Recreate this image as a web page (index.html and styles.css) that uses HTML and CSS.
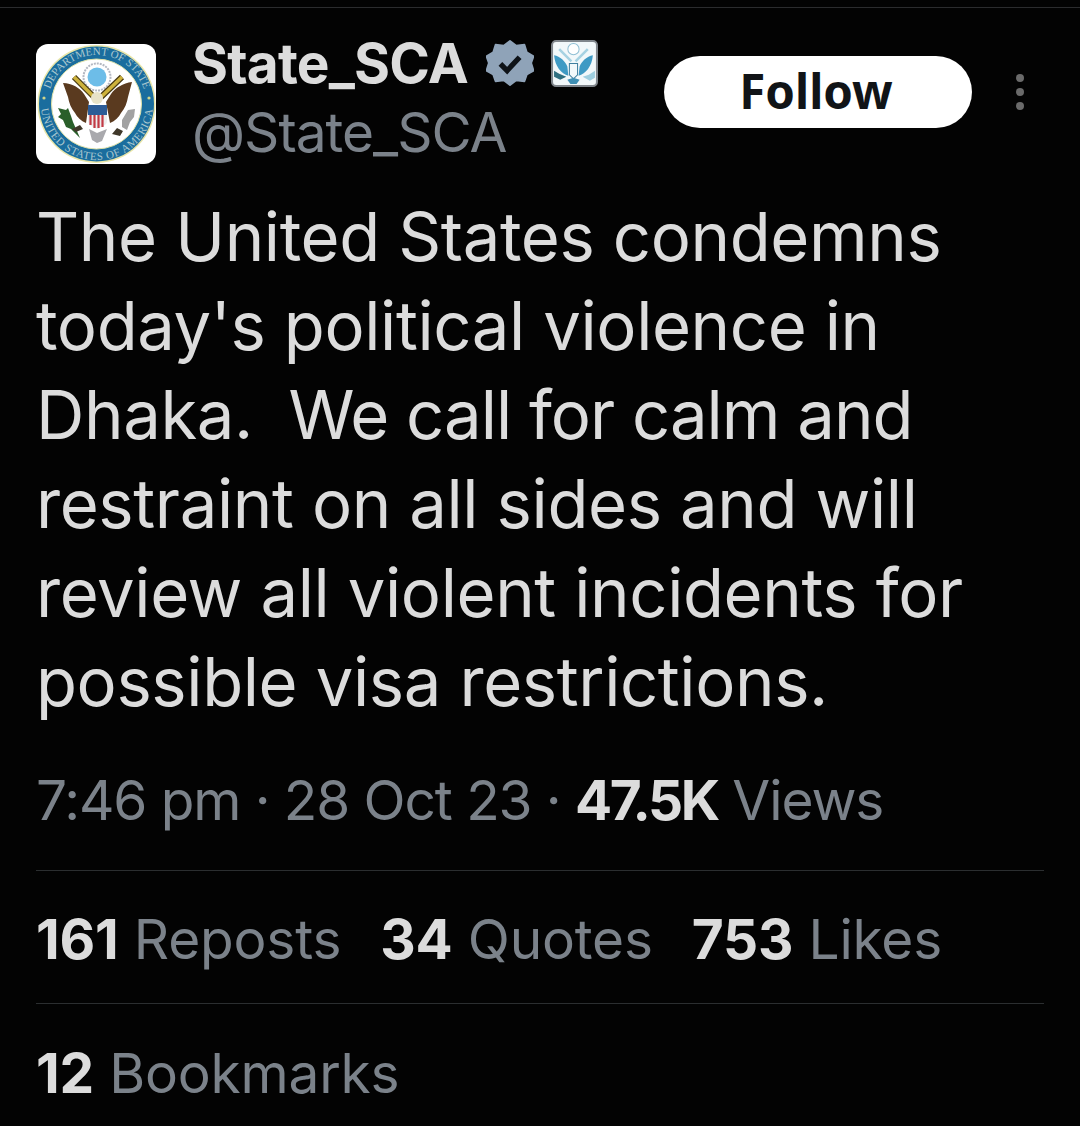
FILE: index.html
```html
<!DOCTYPE html>
<html lang="en">
<head>
    <meta charset="UTF-8">
    <meta name="viewport" content="width=device-width, initial-scale=1.0">
    <title>State_SCA</title>
    <link rel="stylesheet" href="styles.css">
</head>
<body>
    <div class="topline"></div>
    <div class="tweet">
        <div class="head">
            <div class="avatar">
                <svg viewBox="0 0 120 120" width="120" height="120">
                    <defs>
                        <path id="arcTop" d="M12 60a49 49 0 0 1 98 0"/>
                        <path id="arcBottom" d="M5 60a56 56 0 0 0 112 0"/>
                    </defs>
                    <circle cx="60.500" cy="60" r="59" fill="#e9e6a8"/>
                    <circle cx="60.500" cy="60" r="57.500" fill="#1a6d9e"/>
                    <circle cx="60.500" cy="60" r="45" fill="#fff" stroke="#dfe2a8"/>
                    <circle cx="8" cy="54" r="1.600" fill="#cfd48a"/>
                    <circle cx="113" cy="54" r="1.600" fill="#cfd48a"/>
                    <text class="seal-text"><textPath href="#arcTop" startOffset="50%" text-anchor="middle">DEPARTMENT OF STATE</textPath></text>
                    <text class="seal-text wide"><textPath href="#arcBottom" startOffset="50%" text-anchor="middle">UNITED STATES OF AMERICA</textPath></text>
                    <circle cx="61" cy="33" r="13.500" fill="#fff" stroke="#b4b8c2" stroke-width="2" stroke-dasharray="2 1"/>
                    <circle cx="61" cy="33" r="9.500" fill="#6dbde8"/>
                    <path d="M27 39c9 0 17 5 21 11l5 8-3 21c-5-2-9-6-11-10-4-5-6-10-7-16z" fill="#5a3a1f"/>
                    <path d="M96 38c-9 1-17 6-21 12l-5 8 4 21c5-2 9-6 11-10 4-5 6-10 7-16z" fill="#5a3a1f"/>
                    <path d="M38 33l20 20M86 33 65 53" stroke="#4a3b14" stroke-width="6" fill="none"/>
                    <path d="M38 33l20 20M86 33 65 53" stroke="#cdb23c" stroke-width="3.500" fill="none"/>
                    <circle cx="61" cy="54" r="6" fill="#e8e2c8"/>
                    <path d="M52 61h19v16c0 4-5 6-9.500 8-4.500-2-9.500-4-9.500-8z" fill="#eee"/>
                    <path d="M54.500 71v10M58.500 71v13M62.500 71v13M66.500 71v12" stroke="#c23a45" stroke-width="2.200"/>
                    <rect x="52" y="61" width="19" height="10" fill="#2c5c97"/>
                    <path d="M22 64l8 2 2-2 3 8 2 6 7 16-9-9-5-2-3-7-5-3 3-3z" fill="#2a5f2a"/>
                    <path d="M86 76l6-10 7-1-1 8-4 5-3 8-5-3z" fill="#a2a2a2"/>
                    <path d="M53 85l3 11 5 3 5-2 5-12-10 4z" fill="#a9a9ad"/>
                    <path d="M36 85l8-4 3 4-7 3zM76 90l5-6 6 3-3 5z" fill="#40382a"/>
                </svg>
            </div>
            <div class="names">
                <div class="name-row">
                    <span class="name">State_SCA</span>
                    <svg class="badge" viewBox="0 0 50 50" width="48" height="48">
                        <path d="M25 2l6.500 5 8.500-1 2.500 8 7 4-2.500 7 2.500 8-7 4-2.500 7-8.500-1-6.500 5-6.500-5-8.500 1-2.500-7-7-4 2.500-8-2.500-7 7-4 2.500-8 8.500 1z" fill="#8fa3b8" stroke="#8fa3b8" stroke-width="2" stroke-linejoin="round"/>
                        <path d="M15 26l7 7 13-14" fill="none" stroke="#0e1318" stroke-width="5.500"/>
                    </svg>
                    <span class="gov-mark">
                        <svg viewBox="0 0 46 46" width="47" height="47">
                            <rect x="1" y="1" width="44" height="44" rx="4" fill="#f2f8fa" stroke="#80868c" stroke-width="2"/>
                            <circle cx="22" cy="9" r="5.500" fill="#fff" stroke="#8fbfd4"/>
                            <path d="M8 9l12 12M36 9 24 21" stroke="#a6d2e2" stroke-width="2.500"/>
                            <path d="M3 15c6 1 11 6 13 11l1 9c-7-2-13-9-14-20zM41 15c-6 1-11 6-13 11l-1 9c7-2 13-9 14-20z" fill="#3f9ac4"/>
                            <path d="M18 23h8v11l-4 4-4-4z" fill="#f2f8fa" stroke="#3f7f9f"/>
                            <path d="M3 30l5 3 7 3-6 3-6-3z" fill="#2f6f80"/>
                            <path d="M43 30l-6 4-6 2 7 4 5-3z" fill="#9fcfe0"/>
                            <path d="M16 39l6-2 6 2-3 4h-6z" fill="#3f8fb4"/>
                        </svg>
                    </span>
                </div>
                <div class="handle">@State_SCA</div>
            </div>
            <button class="follow">Follow</button>
            <div class="more"><i></i><i></i><i></i></div>
        </div>
        <p class="text">The United States condemns<br>today's political violence in<br>Dhaka.<span class="tight">&nbsp; We call for calm and</span><br>restraint on all sides and will<br>review all violent incidents for<br>possible visa restrictions.</p>
        <div class="meta">7:46 pm · 28 Oct 23 · <b>47.5K</b> Views</div>
        <div class="stats">
            <span><b>161</b> Reposts</span>
            <span><b>34</b> Quotes</span>
            <span><b>753</b> Likes</span>
        </div>
        <div class="stats last">
            <span><b>12</b> Bookmarks</span>
        </div>
    </div>
</body>
</html>
```
FILE: styles.css
```css
*{
    box-sizing: border-box;
}
html, body{
    height: 100%;
}
body{
    margin: 0;
    background-color: #030303;
    font-family: Inter, 'Liberation Sans', sans-serif;
    overflow: hidden;
}
.topline{
    height: 1px;
    margin-top: 7px;
    background-color: #2b2c2e;
}
.tweet{
    padding: 0 36px;
}
.head{
    display: flex;
    align-items: flex-start;
    padding-top: 36px;
}
.avatar{
    width: 120px;
    height: 120px;
    background-color: #fff;
    border-radius: 12px;
    overflow: hidden;
    flex-shrink: 0;
}
.avatar svg{
    display: block;
}
.seal-text{
    font-family: 'Liberation Serif', serif;
    font-size: 11px;
    fill: #a9c7cf;
}
.seal-text.wide{
    letter-spacing: 0.6px;
}
.names{
    margin-left: 36px;
    width: 472px;
    margin-top: -11px;
}
.name-row{
    display: flex;
    align-items: center;
    height: 60px;
}
.name{
    font-size: 55px;
    line-height: 60px;
    font-weight: 700;
    color: #dcdcdc;
    letter-spacing: -0.8px;
}
.badge{
    margin-left: 18px;
}
.gov-mark{
    margin-left: 17px;
    height: 47px;
}
.handle{
    margin-top: 7px;
    font-size: 55px;
    color: #7b828a;
    line-height: 64px;
    letter-spacing: -1px;
}
.follow{
    width: 308px;
    height: 72px;
    margin-top: 12px;
    padding: 0 4px 4px 0;
    border: 0;
    border-radius: 36px;
    background-color: #fff;
    color: #111417;
    font-family: 'Noto Sans', sans-serif;
    font-size: 47.500px;
    font-weight: 700;
}
.more{
    display: flex;
    flex-direction: column;
    gap: 6px;
    margin-left: 44px;
    margin-top: 30px;
}
.more i{
    width: 8px;
    height: 8px;
    border-radius: 50%;
    background-color: #6a6a6a;
}
.text{
    margin: 28px 0 0;
    font-size: 67px;
    line-height: 89px;
    color: #dcdcdc;
    letter-spacing: -0.4px;
}
.tight{
    letter-spacing: -1px;
}
.meta{
    margin-top: 42px;
    padding-bottom: 38px;
    font-size: 55px;
    line-height: 64px;
    color: #7b828a;
    border-bottom: 1px solid #2b2e30;
    letter-spacing: -1.1px;
}
.meta b{
    color: #dcdcdc;
    letter-spacing: -2.4px;
}
.stats{
    display: flex;
    gap: 39px;
    height: 133px;
    padding-top: 4px;
    align-items: center;
    font-size: 55px;
    color: #7b828a;
    border-bottom: 1px solid #2b2e30;
    letter-spacing: -0.2px;
}
.stats b{
    color: #dcdcdc;
}
.stats.last{
    border-bottom: 0;
}
```
